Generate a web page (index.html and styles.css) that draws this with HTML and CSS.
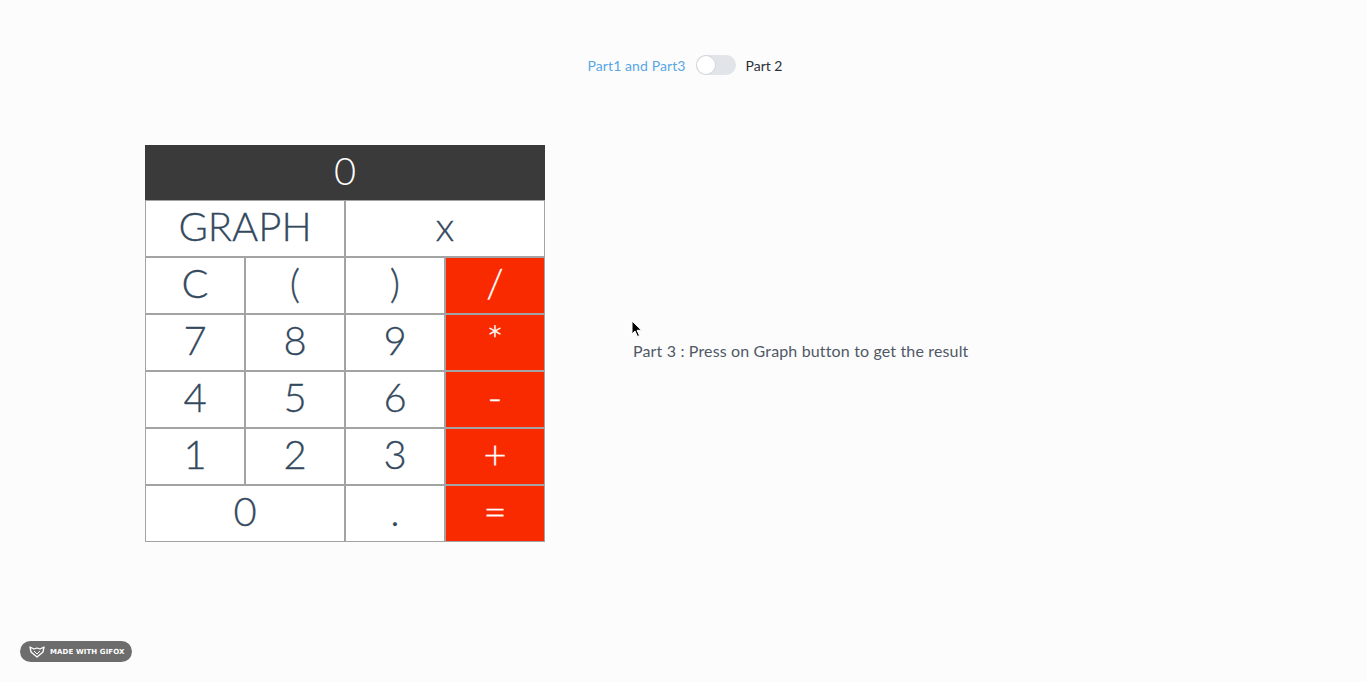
FILE: index.html
```html
<!DOCTYPE html>
<html>
<head>
<meta charset="utf-8">
<link rel="stylesheet" href="styles.css">
</head>
<body>
<div class="page">
  <header class="switcher">
    <span class="label-active">Part1 and Part3</span>
    <span class="toggle"><span class="knob"></span></span>
    <span class="label">Part 2</span>
  </header>
  <main class="main">
    <div class="calc">
      <div class="display">0</div>
      <div class="key span2">GRAPH</div>
      <div class="key span2">x</div>
      <div class="key">C</div>
      <div class="key">(</div>
      <div class="key">)</div>
      <div class="key op">/</div>
      <div class="key">7</div>
      <div class="key">8</div>
      <div class="key">9</div>
      <div class="key op">*</div>
      <div class="key">4</div>
      <div class="key">5</div>
      <div class="key">6</div>
      <div class="key op">-</div>
      <div class="key">1</div>
      <div class="key">2</div>
      <div class="key">3</div>
      <div class="key op">+</div>
      <div class="key span2">0</div>
      <div class="key">.</div>
      <div class="key op">=</div>
    </div>
    <p class="hint">Part 3 : Press on Graph button to get the result</p>
  </main>
  <svg class="cursor" width="12" height="18" viewBox="0 0 12 18"><path d="M1 1 L1 14 L4 11 L6.5 16.5 L8.5 15.6 L6 10.3 L10.5 10.3 Z" fill="#000" stroke="#fff" stroke-width="1"/></svg>
  <div class="gifox">
    <svg width="16" height="12" viewBox="0 0 16 12"><path d="M1 1 L5 3 L8 2 L11 3 L15 1 L14 6 L8 11 L2 6 Z" fill="none" stroke="#fff" stroke-width="1.3" stroke-linejoin="round"/><path d="M5 5 L8 8 L11 5" fill="none" stroke="#fff" stroke-width="1"/></svg>
    <span>MADE WITH GIFOX</span>
  </div>
</div>
</body>
</html>
```
FILE: styles.css
```css
html, body {
  margin: 0;
  padding: 0;
  background: #fcfcfc;
}
.page {
  position: relative;
  width: 1367px;
  height: 682px;
  font-family: Lato, "Open Sans", sans-serif;
  overflow: hidden;
}
.switcher {
  display: flex;
  justify-content: center;
  align-items: center;
  gap: 10px;
  padding-top: 55px;
  height: 20px;
  font-size: 14px;
  padding-left: 3px;
}
.label-active { color: #58a6e6; letter-spacing: 0.1px; }
.label { color: #2a2f36; }
.toggle {
  position: relative;
  width: 40px;
  height: 20px;
  border-radius: 10px;
  background: #e1e4e9;
}
.knob {
  position: absolute;
  left: 1px;
  top: 1px;
  width: 18px;
  height: 18px;
  border-radius: 50%;
  background: #fff;
  box-shadow: 0 0 0 1px #d3d6db;
}
.main {
  display: flex;
  align-items: center;
  padding-left: 145px;
  padding-top: 70px;
}
.calc {
  display: grid;
  grid-template-columns: repeat(4, 100px);
  grid-template-rows: 55px repeat(6, 57px);
}
.display {
  grid-column: span 4;
  background: #3a3a3a;
  color: #fff;
  font-size: 38px;
  font-weight: 300;
  display: flex;
  align-items: center;
  justify-content: center;
  padding-bottom: 6px;
  box-sizing: border-box;
}
.key {
  box-sizing: border-box;
  border: 1px solid #a3a3a3;
  background: #fff;
  color: #34495e;
  font-size: 40px;
  font-weight: 300;
  -webkit-text-stroke: 0.3px currentColor;
  display: flex;
  align-items: center;
  justify-content: center;
  padding-bottom: 5px;
}
.span2 { grid-column: span 2; }
.op {
  background: #f92a00;
  color: #fff;
}
.hint {
  margin: 14px 0 0 88px;
  font-size: 16px;
  letter-spacing: 0.15px;
  color: #4f5966;
}
.cursor {
  position: absolute;
  left: 631px;
  top: 320px;
}
.gifox {
  position: absolute;
  left: 20px;
  top: 641px;
  width: 112px;
  height: 21px;
  border-radius: 11px;
  background: #6d6d6d;
  display: flex;
  align-items: center;
  gap: 5px;
  padding-left: 9px;
  box-sizing: border-box;
  color: #fff;
  font-family: "DejaVu Sans", sans-serif;
  font-weight: bold;
  font-size: 7px;
  letter-spacing: 0.1px;
}
```
